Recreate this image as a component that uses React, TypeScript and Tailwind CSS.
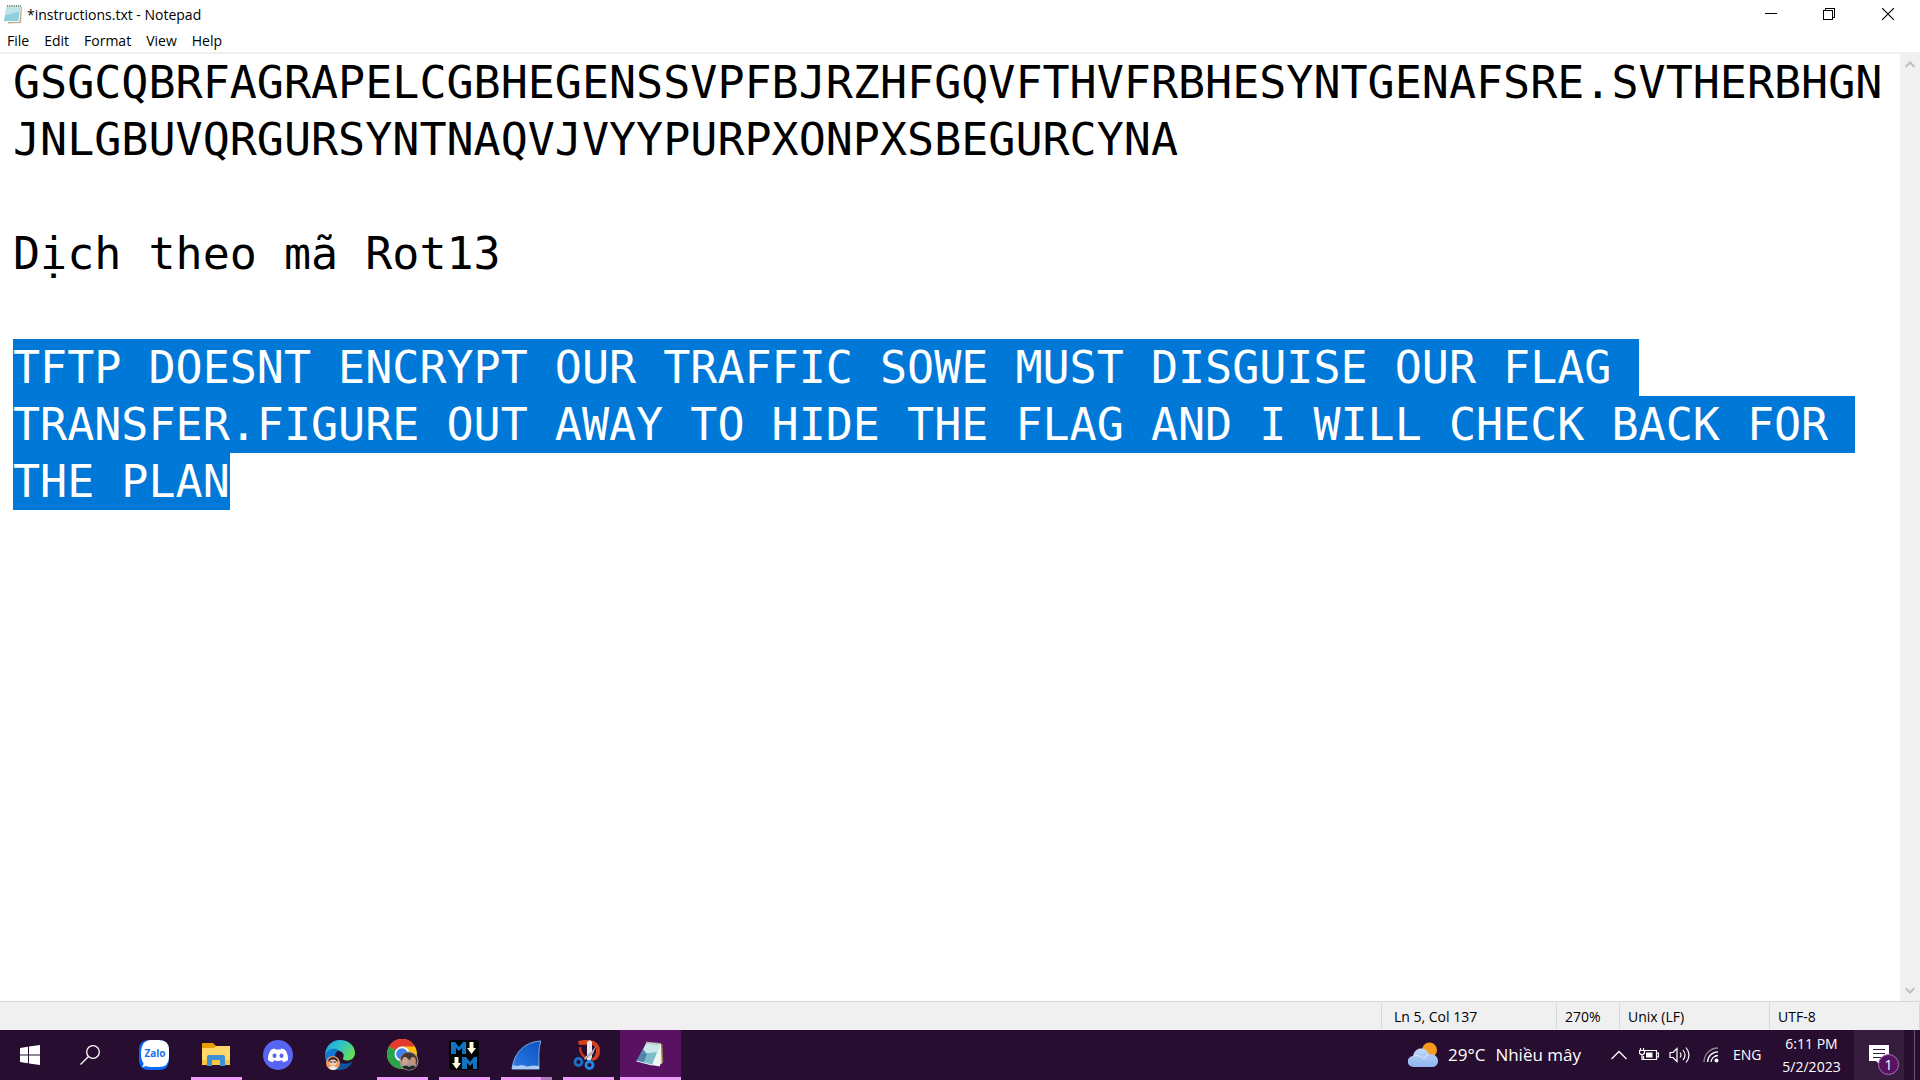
import { useEffect, useRef } from "react";
import type { ReactNode } from "react";

const DOCUMENT_START =
  "GSGCQBRFAGRAPELCGBHEGENSSVPFBJRZHFGQVFTHVFRBHESYNTGENAFSRE.SVTHERBHGNJNLGBUVQRGURSYNTNAQVJVYYPURPXONPXSBEGURCYNA\n\nDịch theo mã Rot13\n\n";
const DECODED =
  "TFTP DOESNT ENCRYPT OUR TRAFFIC SOWE MUST DISGUISE OUR FLAG\nTRANSFER.FIGURE OUT AWAY TO HIDE THE FLAG AND I WILL CHECK BACK FOR\nTHE PLAN";

function NotepadIcon({ className }: { className: string }) {
  return (
    <svg viewBox="0 0 20 20" className={className} aria-hidden="true">
      <path d="M5 2h12l2 1-1 16-13 .5z" fill="#b9ad94" />
      <path d="M4 2h14l-1.5 16H1z" fill="#f4f8f8" />
      <path d="M3.500 3.500h13.500l-1.500 13.500H.8z" fill="#8fd0de" />
      <path d="M3.500 3.500h13.500l-.5 4-14.500 4z" fill="#bfe3e8" />
      <path d="M4 2h14" stroke="#7d8785" strokeWidth="2" strokeDasharray="1.200 1" />
    </svg>
  );
}

function TaskNotepadIcon() {
  return (
    <svg viewBox="0 0 30 30" className="size-[30px]" aria-hidden="true">
      <path d="M25 3.500l2.500 1 .8 18-3.500 2z" fill="#8d6f46" />
      <path d="M12 2l14 1.500.8 20-3.300 2z" fill="#e9e4d2" />
      <path d="M11 2.500L25.500 4 25 26.500 16 25z" fill="#eef7f6" />
      <path d="M11 3.500L25 5 17 25 1.500 21z" fill="#7cbccb" />
      <path d="M11 3.500L25 5 22 12 6 14z" fill="#c9e7e9" />
      <path d="M8 9L1.500 21l7 1.800L12 14z" fill="#4474a3" opacity=".8" />
      <path d="M1.500 21L17 25" stroke="#e8f4f6" strokeWidth="1" />
      <path d="M11 2.500l14.500 1.500" stroke="#a9afae" strokeWidth="2" strokeDasharray="1.500 1" />
    </svg>
  );
}

function ZaloIcon() {
  return (
    <svg viewBox="0 0 30 30" className="size-[30px]" aria-hidden="true">
      <path d="M10 0h10q10 0 10 10v10q0 10-10 10H10Q0 30 0 20V10Q0 0 10 0z" fill="#0a68f5" />
      <path d="M12 0h8q10 0 10 10v7q0 10-10 10h-8q-3 0-5-1-2 1-4 1 2-2 1.500-4Q2 20 2 14 2 0 12 0z" fill="#fff" />
      <text x="16" y="17" textAnchor="middle" fontSize="10" fontWeight="700" fontFamily="Open Sans, sans-serif" fill="#1a6ff0">Zalo</text>
    </svg>
  );
}

function ExplorerIcon() {
  return (
    <svg viewBox="0 0 30 30" className="size-[30px]" aria-hidden="true">
      <path d="M1 4q0-1 1-1h10l3 3v6H1z" fill="#e6a100" />
      <path d="M1 8h12l2-2h14v19H1z" fill="#ffd869" />
      <path d="M1 20h28v5H1z" fill="#f8c644" />
      <path d="M6 26v-9q0-2 2-2h14q2 0 2 2v9h-5v-6h-8v6z" fill="#3d90d6" />
    </svg>
  );
}

function DiscordIcon() {
  return (
    <svg viewBox="0 0 30 30" className="size-[30px]" aria-hidden="true">
      <circle cx="15" cy="15" r="15" fill="#5865f2" />
      <path d="M12 8.500c-1.500.2-3 .7-4.200 1.400C5.500 13 4.800 16.500 5 20c1.500 1.200 3.100 1.800 4.800 2.200l1.200-1.900c2.600.8 5.400.8 8 0l1.200 1.900c1.700-.4 3.300-1 4.800-2.200.3-3.500-.5-7-2.800-10.100-1.200-.7-2.700-1.200-4.200-1.400l-.6 1.200c-1.600-.2-3.200-.2-4.800 0z" fill="#fff" />
      <ellipse cx="11.500" cy="15.700" rx="2" ry="2.200" fill="#5865f2" />
      <ellipse cx="18.500" cy="15.700" rx="2" ry="2.200" fill="#5865f2" />
    </svg>
  );
}

function EdgeIcon() {
  return (
    <svg viewBox="0 0 30 30" className="size-[30px]" aria-hidden="true">
      <defs>
        <linearGradient id="edge-top" x1="0" y1="0" x2="1" y2="0.500">
          <stop offset="0" stopColor="#1c9be0" />
          <stop offset="0.500" stopColor="#2fc2d0" />
          <stop offset="1" stopColor="#62dc5a" />
        </linearGradient>
      </defs>
      <path d="M15 0c9 0 15 6 15 13 0 5-4 7.500-8 7.500-3 0-4.500-1-4-2.500 1.200-1.500 1-5-2-6.500C10 8.500 3 11 0 16 0 6 7 0 15 0z" fill="url(#edge-top)" />
      <path d="M0 16C1 9 9 7 14 10c-4 2-5 6-3 11 2 4 6 7 11 7-12 5-22-2-22-12z" fill="#1478d0" />
      <path d="M11 17c0 6 8 9 16.500 4.500C26 26 20 30 15 30 9 27 9 21 11 17z" fill="#10559c" />
      <circle cx="8" cy="23" r="7" fill="#f39a5b" />
      <path d="M3 20q5-6 10 0l-1 2H4z" fill="#2c2634" />
      <ellipse cx="8" cy="22.500" rx="3.800" ry="3" fill="#f5cfb8" />
      <path d="M3.500 28q4-4 9 0-4 4-9 0z" fill="#e9edf2" />
      <path d="M5 22h2.500m1 0H11" stroke="#222" strokeWidth="1" />
    </svg>
  );
}

function ChromeIcon() {
  return (
    <svg viewBox="-1 0 34 32" className="h-8 w-[34px]" aria-hidden="true">
      <circle cx="16" cy="15" r="15" fill="#fbc116" />
      <path d="M16 15L3 7.500A15 15 0 0 1 29 7.500H16z" fill="#e33b2e" />
      <path d="M3 7.500A15 15 0 0 0 16 30l6.500-11.500L16 15z" fill="#2ba24c" />
      <circle cx="16" cy="15" r="7.500" fill="#fff" />
      <circle cx="16" cy="15" r="5.800" fill="#3f7ff0" />
      <circle cx="23" cy="22" r="9.500" fill="#a39b93" />
      <path d="M14.500 19q3-6 7.500-5.500 7.500-.5 9.500 7.500l-1 6-3-8-4 2-4-3-4 4z" fill="#453733" />
      <ellipse cx="19" cy="22" rx="2.800" ry="4" fill="#d2a28b" />
      <ellipse cx="27" cy="22" rx="2.800" ry="4" fill="#c99379" />
      <path d="M16 28q4-3 7 0 4-3 7 0-7 6-14 0z" fill="#26242c" />
    </svg>
  );
}

function MarkdownIcon() {
  return (
    <svg viewBox="0 0 30 30" className="size-[30px]" aria-hidden="true">
      <rect width="30" height="30" rx="3" fill="#000" />
      <path d="M2 2h4l4 5 4-5h3v12h-4V8l-3 3-3-3v6H2zM13 17h4l4 5 4-5h3v12h-4v-6l-3 3-3-3v6h-5z" fill="#1273c2" />
      <path d="M20.500 2h4v6H27l-4.500 6L18 8h2.500zM5.500 17h4v6H12l-4.500 6L3 23h2.500z" fill="#fffde2" />
    </svg>
  );
}

function SharkFinIcon() {
  return (
    <svg viewBox="0 0 30 30" className="size-[30px]" aria-hidden="true">
      <defs>
        <linearGradient id="fin" x1="0" y1="1" x2="1" y2="0">
          <stop offset="0" stopColor="#2f7be8" />
          <stop offset="1" stopColor="#0b52bd" />
        </linearGradient>
      </defs>
      <path d="M1 29C3 13 13 2 30 1c-3 8-2 18-2 28z" fill="url(#fin)" stroke="#7cb0f0" strokeWidth="1" />
      <path d="M1 29l1-4 4 1 5-1 5 1.500 6-1 6 .5v3z" fill="#a9cdf5" />
    </svg>
  );
}

function SnipIcon() {
  return (
    <svg viewBox="-2 0 30 30" className="size-[30px]" aria-hidden="true">
      <path d="M3 1Q9-.5 14 0q11 1 11 11 0 8-7 10l-2-2q5-3 5-8 0-6-6-6.500L4 5z" fill="#d2411a" />
      <path d="M5 7q0 7 6 11" fill="none" stroke="#c03714" strokeWidth="2.500" />
      <path d="M12 2l3-2 2 2v15l-2 5-3-2z" fill="#e8e8ea" />
      <path d="M21 6l-3 8-8 6-1-2 7-6z" fill="#aeb0b5" />
      <circle cx="3.500" cy="22" r="3.500" fill="none" stroke="#1b70c4" strokeWidth="2.800" />
      <circle cx="14.500" cy="25" r="3.500" fill="none" stroke="#1d8be6" strokeWidth="2.800" />
    </svg>
  );
}

function WindowsIcon() {
  return (
    <svg viewBox="0 0 20 20" className="size-5" aria-hidden="true">
      <path d="M0 3l8-1.200V9.500H0zM9 1.600L20 0v9.500H9zM0 10.500h8v7.700L0 17zM9 10.500h11V20L9 18.400z" fill="#fff" />
    </svg>
  );
}

function SearchIcon() {
  return (
    <svg viewBox="0 0 20 20" className="size-5" fill="none" stroke="#fff" strokeWidth="1.300" aria-hidden="true">
      <circle cx="13" cy="7" r="6.300" />
      <path d="M8.500 11.500L.5 19.500" />
    </svg>
  );
}

function WeatherIcon() {
  return (
    <svg viewBox="0 0 30 26" className="h-[26px] w-[30px]" aria-hidden="true">
      <defs>
        <linearGradient id="cloud" x1="0" y1="0" x2="0" y2="1">
          <stop offset="0" stopColor="#c3dafa" />
          <stop offset="1" stopColor="#8fb2ee" />
        </linearGradient>
      </defs>
      <circle cx="21.500" cy="8" r="7.500" fill="#f69a1e" />
      <path d="M5.500 25a5.500 5.500 0 0 1-.5-11C6 8.500 10 6 14 6.500c4 .5 6 3 7 6 5-1 9 2 9 6.500 0 4-3 6-6 6z" fill="url(#cloud)" />
      <path d="M6 14c4-1 8 0 10 3 1-3 3-4 5-4.500" stroke="#dce9fc" strokeWidth="1" fill="none" />
    </svg>
  );
}

function Chevron({ up }: { up?: boolean }) {
  return (
    <svg viewBox="0 0 10 7" className="h-[7px] w-[10px]" fill="none" stroke="#bdbdbd" strokeWidth="2" aria-hidden="true">
      <path d={up ? "M.7 5.700L5 1.500l4.300 4.200" : "M.7 1.300L5 5.500l4.300-4.200"} />
    </svg>
  );
}

type Task = { name: string; icon: ReactNode; state: "idle" | "open" | "multi" | "active" };

const TASKS: Task[] = [
  { name: "Zalo", icon: <ZaloIcon />, state: "idle" },
  { name: "File Explorer", icon: <ExplorerIcon />, state: "open" },
  { name: "Discord", icon: <DiscordIcon />, state: "idle" },
  { name: "Microsoft Edge", icon: <EdgeIcon />, state: "idle" },
  { name: "Google Chrome", icon: <ChromeIcon />, state: "open" },
  { name: "Markdown editor", icon: <MarkdownIcon />, state: "open" },
  { name: "Wireshark", icon: <SharkFinIcon />, state: "multi" },
  { name: "Snipping Tool", icon: <SnipIcon />, state: "open" },
  { name: "Notepad", icon: <TaskNotepadIcon />, state: "active" },
];

function TaskButton({ task }: { task: Task }) {
  const active = task.state === "active";
  return (
    <button
      aria-label={task.name}
      className={`relative flex h-full items-center justify-center pr-0.5 ${active ? "w-[61px] bg-[#591161]" : "w-[62px]"}`}
    >
      {task.icon}
      {task.state !== "idle" && (
        <span className={`absolute bottom-0 flex h-[3px] bg-[#ee9ef6] ${active ? "inset-x-0" : "left-[5px] right-1.5"}`}>
          {task.state === "multi" && <span className="ml-auto w-[11px] bg-[#b57abb]" />}
        </span>
      )}
    </button>
  );
}

function Editor() {
  const ref = useRef<HTMLTextAreaElement>(null);
  useEffect(() => {
    const box = ref.current;
    if (!box) return;
    box.focus();
    box.setSelectionRange(DOCUMENT_START.length, DOCUMENT_START.length + DECODED.length);
  }, []);
  return (
    <textarea
      ref={ref}
      aria-label="Text editor"
      spellCheck={false}
      defaultValue={DOCUMENT_START + DECODED}
      className="min-w-0 flex-1 resize-none overflow-hidden bg-white pl-[13px] pr-2 font-['DejaVu_Sans_Mono',monospace] text-[45px] leading-[57px] text-black outline-none wrap-break-word selection:bg-[#0078d7] selection:text-white"
    />
  );
}

export default function App() {
  return (
    <div className="flex h-screen flex-col overflow-hidden bg-white font-['Open_Sans','Noto_Sans',sans-serif] text-sm text-black">
      <header className="flex h-7 shrink-0 items-center pl-[3px]">
        <NotepadIcon className="size-5" />
        <h1 className="ml-1 whitespace-nowrap pt-0.5">*instructions.txt - Notepad</h1>
        <div className="ml-auto flex h-full">
          <button aria-label="Minimize" className="flex w-[58px] items-center justify-center">
            <svg viewBox="0 0 12 12" className="size-3" stroke="#000" shapeRendering="crispEdges">
              <path d="M0 5.500h12" />
            </svg>
          </button>
          <button aria-label="Restore" className="flex w-[58px] items-center justify-center">
            <svg viewBox="0 0 12 12" className="size-3" fill="none" stroke="#000" shapeRendering="crispEdges">
              <path d="M.5 2.500h9v9h-9zM2.500 2.500v-2h9v9h-2" />
            </svg>
          </button>
          <button aria-label="Close" className="flex w-[62px] items-center justify-center pr-0.5">
            <svg viewBox="0 0 12 12" className="size-3" stroke="#000" strokeWidth="1.200">
              <path d="M0 0l12 12M12 0L0 12" />
            </svg>
          </button>
        </div>
      </header>

      <nav className="flex h-6 shrink-0 items-center gap-[15px] pt-0.5 pl-[7px]">
        {["File", "Edit", "Format", "View", "Help"].map((item) => (
          <button key={item}>{item}</button>
        ))}
      </nav>

      <main className="flex min-h-0 flex-1 border-t-2 border-[#f0f0f0]">
        <Editor />
        <div className="flex w-5 flex-col items-center justify-between bg-[#f0f0f0] py-[7px]">
          <button aria-label="Scroll up">
            <Chevron up />
          </button>
          <button aria-label="Scroll down">
            <Chevron />
          </button>
        </div>
      </main>

      <footer className="flex h-[29px] shrink-0 items-stretch justify-end border-t border-[#d7d7d7] bg-[#f0f0f0] py-px leading-7">
        <span className="w-[175px] border-l border-[#d7d7d7] pl-3">Ln 5, Col 137</span>
        <span className="w-[63px] border-l border-[#d7d7d7] pl-2">270%</span>
        <span className="w-[150px] border-l border-[#d7d7d7] pl-2">Unix (LF)</span>
        <span className="w-[151px] border-x border-[#d7d7d7] pl-2">UTF-8</span>
      </footer>

      <div className="flex h-[50px] shrink-0 items-center bg-[#270d2f] text-white">
        <button aria-label="Start" className="flex h-full w-15 items-center justify-center">
          <WindowsIcon />
        </button>
        <button aria-label="Search" className="flex h-full w-16 items-center justify-center pr-1">
          <SearchIcon />
        </button>
        {TASKS.map((task) => (
          <TaskButton key={task.name} task={task} />
        ))}

        <div className="ml-auto flex h-full items-center">
          <button className="flex items-center gap-2.5 text-[17px]">
            <WeatherIcon />
            <span className="flex gap-2.5">
              <span>29°C</span>
              <span>Nhiều mây</span>
            </span>
          </button>
          <button aria-label="Show hidden icons" className="ml-[30px]">
            <svg viewBox="0 0 16 10" className="h-2.5 w-4" fill="none" stroke="#fff" strokeWidth="1.300">
              <path d="M.5 9L8 1.500 15.500 9" />
            </svg>
          </button>
          <button aria-label="Battery" className="ml-3">
            <svg viewBox="0 0 20 14" className="h-3.5 w-5" fill="none" stroke="#fff" strokeWidth="1.200">
              <path d="M6 2.500h11.500v9H4.500V8M17.500 5h2v4h-2M1.500 0v2.500M4.500 0v2.500M.5 2.500h5v2q0 2-2.500 2t-2.500-2zM3 6.500v5h2" />
              <path d="M7 4.500h6.500v5H7z" fill="#fff" stroke="none" />
            </svg>
          </button>
          <button aria-label="Volume" className="ml-2.5">
            <svg viewBox="0 0 22 18" className="h-[18px] w-[22px]" fill="none" stroke="#fff" strokeWidth="1.200">
              <path d="M1 6.500h3l4-4v13l-4-4H1zM11 6.500q2 2.500 0 5M14 4q4 5 0 10M17 1.500q6 7.500 0 15" />
            </svg>
          </button>
          <button aria-label="Network" className="ml-3">
            <svg viewBox="0 0 16 16" className="size-4" fill="none" stroke="#fff" strokeWidth="1.300">
              <path d="M1 15A14 14 0 0 1 15 1" opacity=".5" />
              <path d="M4.500 15A10.500 10.500 0 0 1 15 4.800M8 15a7 7 0 0 1 7-6.500" />
              <circle cx="13.500" cy="13.500" r="2" fill="#fff" stroke="none" />
            </svg>
          </button>
          <button className="ml-3.5 w-9 text-left">ENG</button>
          <button className="flex w-[85px] flex-col items-center leading-[23px]">
            <span>6:11 PM</span>
            <span>5/2/2023</span>
          </button>
          <button aria-label="Notifications" className="relative flex h-full w-[50px] items-center justify-center bg-[#361d3e]">
            <svg viewBox="0 0 20 20" className="size-5">
              <path d="M0 0h20v16h-9v4l-4-4H0z" fill="#fff" />
              <path d="M4 4.500h12M4 8.500h12M4 12.500h8" stroke="#361d3e" />
            </svg>
            <span className="absolute bottom-[5px] right-[5px] flex size-[21px] items-center justify-center rounded-full border border-[#a877b0] bg-[#591161] text-sm">
              1
            </span>
          </button>
          <button aria-label="Show desktop" className="ml-2.5 h-full w-1.5 border-l border-[#6b566f]" />
        </div>
      </div>
    </div>
  );
}
